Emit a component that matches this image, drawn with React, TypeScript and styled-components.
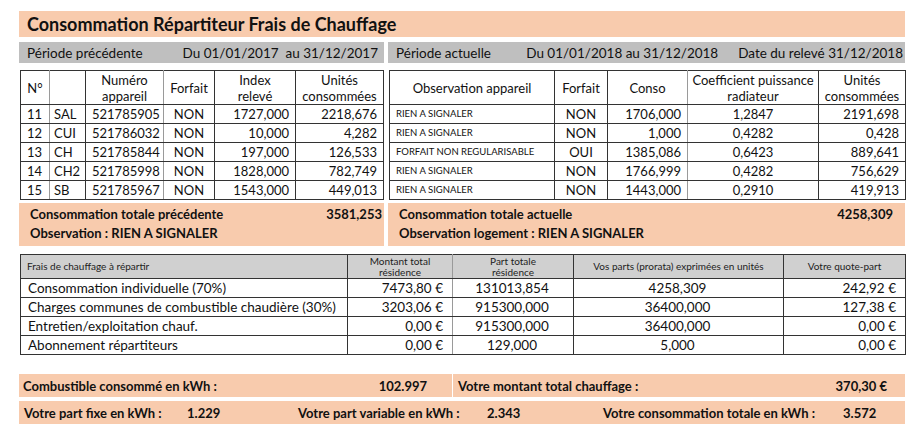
import React from "react"
import styled, { createGlobalStyle } from "styled-components"

// Styles
const PEACH = "#f8cbad"
const BAR_GREY = "#bfbfbf"
const LINE = "#333"
const LIGHT_LINE = "#9a9a9a"

const GlobalStyle = createGlobalStyle`
  * {
    box-sizing: border-box;
  }
  body {
    margin: 0;
    background: #fff;
    font-family: Lato, "Open Sans", sans-serif;
    color: #111;
  }
`

const Page = styled.div`
  width: 905px;
  padding: 11px 0 0 19px;
`

const Title = styled.div`
  background: ${PEACH};
  height: 26px;
  padding-left: 8px;
  font-size: 18px;
  font-weight: 700;
  line-height: 26px;
`

const Columns = styled.div`
  display: grid;
  grid-template-columns: 365px 517px;
  column-gap: 4px;
  margin-top: 5px;
`

const Panel = styled.div`
  display: flex;
  flex-direction: column;
`

const PeriodBar = styled.div`
  background: ${BAR_GREY};
  height: 21px;
  display: flex;
  align-items: center;
  justify-content: space-between;
  padding: 0 6px 0 8px;
  font-size: 13.5px;
  white-space: pre;
`

const DataTable = styled.table<{ $inset?: boolean }>`
  border-collapse: collapse;
  table-layout: fixed;
  margin: 7px ${(p) => (p.$inset ? "1px" : "0")} 0 1px;
  width: ${(p) => (p.$inset ? "363px" : "516px")};
`

const Th = styled.th<{ $light?: boolean }>`
  height: 34px;
  padding: 0 2px;
  font-size: 13px;
  font-weight: 400;
  line-height: 16px;
  text-align: center;
  border: 1px solid ${LINE};
  border-right-color: ${(p) => (p.$light ? LIGHT_LINE : LINE)};
`

const Td = styled.td<{ $align?: string; $light?: boolean; $small?: boolean }>`
  height: 19px;
  padding: 0 6px;
  font-size: ${(p) => (p.$small ? "9.5px" : "13px")};
  line-height: 18px;
  text-align: ${(p) => p.$align || "center"};
  white-space: nowrap;
  overflow: hidden;
  border: 1px solid ${LINE};
  border-right-color: ${(p) => (p.$light ? LIGHT_LINE : LINE)};
`

const TotalBox = styled.div<{ $right: number }>`
  background: ${PEACH};
  margin-top: 3px;
  height: 43px;
  padding: 2px ${(p) => p.$right}px 0 11px;
  font-size: 13px;
  font-weight: 700;
  line-height: 19px;
`

const TotalLine = styled.div`
  display: flex;
  justify-content: space-between;
`

const FeesTable = styled.table`
  border-collapse: collapse;
  table-layout: fixed;
  width: 885px;
  margin: 8px 0 0 1px;
`

const FeesTh = styled.th<{ $align?: string; $light?: boolean }>`
  background: #d0d0d0;
  height: 24px;
  padding: 0 6px;
  font-size: 10px;
  font-weight: 400;
  line-height: 11px;
  color: #222;
  text-align: ${(p) => p.$align || "center"};
  border: 1px solid ${LINE};
  border-right-color: ${(p) => (p.$light ? LIGHT_LINE : LINE)};
`

const FeesTd = styled.td<{ $align?: string; $light?: boolean }>`
  height: 19px;
  padding: 0 9px 0 7px;
  font-size: 13.5px;
  line-height: 18px;
  text-align: ${(p) => p.$align || "right"};
  white-space: nowrap;
  border: 1px solid ${LINE};
  border-right-color: ${(p) => (p.$light ? LIGHT_LINE : LINE)};
`

const SummaryRow = styled.div<{ $cols: string; $top: number }>`
  display: grid;
  grid-template-columns: ${(p) => p.$cols};
  column-gap: 1px;
  margin-top: ${(p) => p.$top}px;
`

const SummaryCell = styled.div<{ $pad?: string }>`
  background: ${PEACH};
  height: 23px;
  display: flex;
  align-items: center;
  padding: ${(p) => p.$pad || "0 4px"};
  font-size: 13px;
  font-weight: 700;
  white-space: pre;
`

const Label = styled.span<{ $width?: number }>`
  width: ${(p) => (p.$width ? `${p.$width}px` : "auto")};
  flex: ${(p) => (p.$width ? "none" : "1")};
`

// Data
const previousRows = [
  ["11", "SAL", "521785905", "NON", "1727,000", "2218,676"],
  ["12", "CUI", "521786032", "NON", "10,000", "4,282"],
  ["13", "CH", "521785844", "NON", "197,000", "126,533"],
  ["14", "CH2", "521785998", "NON", "1828,000", "782,749"],
  ["15", "SB", "521785967", "NON", "1543,000", "449,013"],
]

const currentRows = [
  ["RIEN A SIGNALER", "NON", "1706,000", "1,2847", "2191,698"],
  ["RIEN A SIGNALER", "NON", "1,000", "0,4282", "0,428"],
  ["FORFAIT NON REGULARISABLE", "OUI", "1385,086", "0,6423", "889,641"],
  ["RIEN A SIGNALER", "NON", "1766,999", "0,4282", "756,629"],
  ["RIEN A SIGNALER", "NON", "1443,000", "0,2910", "419,913"],
]

const feeRows = [
  ["Consommation individuelle (70%)", "7473,80 €", "131013,854", "4258,309", "242,92 €"],
  ["Charges communes de combustible chaudière (30%)", "3203,06 €", "915300,000", "36400,000", "127,38 €"],
  ["Entretien/exploitation chauf.", "0,00 €", "915300,000", "36400,000", "0,00 €"],
  ["Abonnement répartiteurs", "0,00 €", "129,000", "5,000", "0,00 €"],
]

const App = () => {
  return (
    <Page>
      <GlobalStyle />
      <Title>Consommation Répartiteur Frais de Chauffage</Title>

      <Columns>
        <Panel>
          <PeriodBar>
            <span>Période précédente</span>
            <span>Du 01/01/2017  au 31/12/2017</span>
          </PeriodBar>
          <DataTable $inset>
            <colgroup>
              <col style={{ width: 29 }} />
              <col style={{ width: 36 }} />
              <col style={{ width: 78 }} />
              <col style={{ width: 51 }} />
              <col style={{ width: 81 }} />
              <col style={{ width: 88 }} />
            </colgroup>
            <thead>
              <tr>
                <Th $light>N°</Th>
                <Th></Th>
                <Th $light>
                  Numéro
                  <br />
                  appareil
                </Th>
                <Th>Forfait</Th>
                <Th>
                  Index
                  <br />
                  relevé
                </Th>
                <Th>
                  Unités
                  <br />
                  consommées
                </Th>
              </tr>
            </thead>
            <tbody>
              {previousRows.map((row) => (
                <tr key={row[0]}>
                  <Td $light $align="left" style={{ paddingLeft: 6 }}>
                    {row[0]}
                  </Td>
                  <Td $align="left" style={{ paddingLeft: 4 }}>
                    {row[1]}
                  </Td>
                  <Td $light $align="left">
                    {row[2]}
                  </Td>
                  <Td>{row[3]}</Td>
                  <Td $align="right">{row[4]}</Td>
                  <Td $align="right">{row[5]}</Td>
                </tr>
              ))}
            </tbody>
          </DataTable>
          <TotalBox $right={2}>
            <TotalLine>
              <span>Consommation totale précédente</span>
              <span>3581,253</span>
            </TotalLine>
            <TotalLine>
              <span>Observation : RIEN A SIGNALER</span>
            </TotalLine>
          </TotalBox>
        </Panel>

        <Panel>
          <PeriodBar style={{ paddingRight: 2 }}>
            <span>Période actuelle</span>
            <span style={{ marginLeft: "auto", marginRight: 20 }}>
              Du 01/01/2018 au 31/12/2018
            </span>
            <span>Date du relevé 31/12/2018</span>
          </PeriodBar>
          <DataTable>
            <colgroup>
              <col style={{ width: 165 }} />
              <col style={{ width: 53 }} />
              <col style={{ width: 80 }} />
              <col style={{ width: 131 }} />
              <col style={{ width: 87 }} />
            </colgroup>
            <thead>
              <tr>
                <Th>Observation appareil</Th>
                <Th>Forfait</Th>
                <Th $light>Conso</Th>
                <Th>
                  Coefficient puissance
                  <br />
                  radiateur
                </Th>
                <Th>
                  Unités
                  <br />
                  consommées
                </Th>
              </tr>
            </thead>
            <tbody>
              {currentRows.map((row, i) => (
                <tr key={i}>
                  <Td $small $align="left">
                    {row[0]}
                  </Td>
                  <Td>{row[1]}</Td>
                  <Td $light $align="right">
                    {row[2]}
                  </Td>
                  <Td>{row[3]}</Td>
                  <Td $align="right">{row[4]}</Td>
                </tr>
              ))}
            </tbody>
          </DataTable>
          <TotalBox $right={12}>
            <TotalLine>
              <span>Consommation totale actuelle</span>
              <span>4258,309</span>
            </TotalLine>
            <TotalLine>
              <span>Observation logement : RIEN A SIGNALER</span>
            </TotalLine>
          </TotalBox>
        </Panel>
      </Columns>

      <FeesTable>
        <colgroup>
          <col style={{ width: 327 }} />
          <col style={{ width: 105 }} />
          <col style={{ width: 121 }} />
          <col style={{ width: 210 }} />
          <col style={{ width: 122 }} />
        </colgroup>
        <thead>
          <tr>
            <FeesTh $align="left">Frais de chauffage à répartir</FeesTh>
            <FeesTh $light>
              Montant total
              <br />
              résidence
            </FeesTh>
            <FeesTh>
              Part totale
              <br />
              résidence
            </FeesTh>
            <FeesTh>Vos parts (prorata) exprimées en unités</FeesTh>
            <FeesTh>Votre quote-part</FeesTh>
          </tr>
        </thead>
        <tbody>
          {feeRows.map((row) => (
            <tr key={row[0]}>
              <FeesTd $align="left">{row[0]}</FeesTd>
              <FeesTd $light>{row[1]}</FeesTd>
              <FeesTd $align="center">{row[2]}</FeesTd>
              <FeesTd $align="center">{row[3]}</FeesTd>
              <FeesTd>{row[4]}</FeesTd>
            </tr>
          ))}
        </tbody>
      </FeesTable>

      <SummaryRow $cols="433px 452px" $top={19}>
        <SummaryCell $pad="0 25px 0 4px">
          <Label>Combustible consommé en kWh :</Label>
          <span>102.997</span>
        </SummaryCell>
        <SummaryCell $pad="0 18px 0 5px">
          <Label>Votre montant total chauffage :</Label>
          <span>370,30 €</span>
        </SummaryCell>
      </SummaryRow>

      <SummaryRow $cols="886px" $top={4}>
        <SummaryCell $pad="0 0 0 5px">
          <Label $width={163}>Votre part fixe en kWh :</Label>
          <Label $width={111}>1.229</Label>
          <Label $width={189}>Votre part variable en kWh :</Label>
          <Label $width={116}>2.343</Label>
          <Label $width={240}>Votre consommation totale en kWh :</Label>
          <span>3.572</span>
        </SummaryCell>
      </SummaryRow>
    </Page>
  )
}

export default App
